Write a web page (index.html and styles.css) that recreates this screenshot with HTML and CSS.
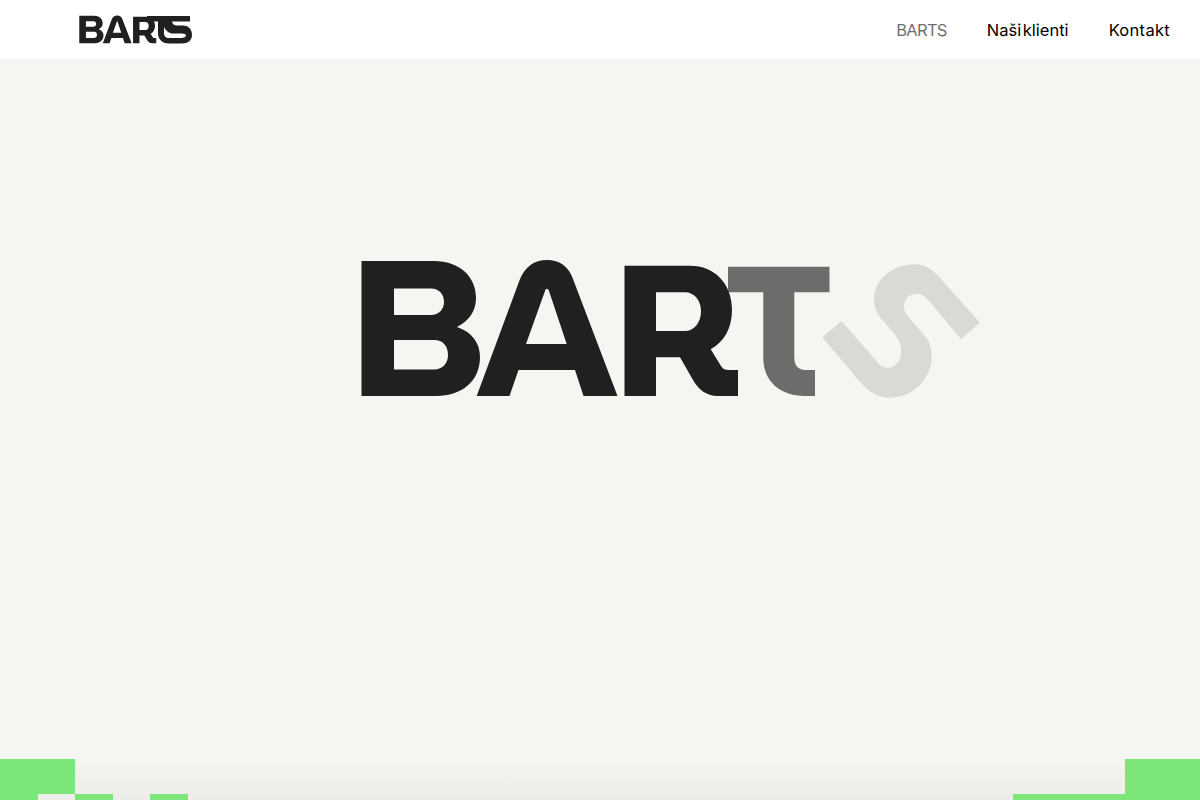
FILE: index.html
```html
<!DOCTYPE html>
<html lang="en">
<head>
    <meta charset="UTF-8">
    <meta name="viewport" content="width=device-width, initial-scale=1.0">
    <title>BARTS</title>
    <link rel="stylesheet" href="styles.css">
</head>
<body>
    <!-- Header -->
    <header class="site-header">
        <a class="brand" href="#" aria-label="BARTS">
            <svg class="brand-logo" viewBox="79 15 114 29" aria-hidden="true">
                <use href="#mark-bar" transform="translate(5.4 -37.65) scale(.2044)"/>
                <path class="ink" fill-rule="evenodd" d="M147 16H190V21.5H172C172.5 24 174 25.5 177 25.5H183C189 25.5 192 30 192 35C192 40 188 43.5 182 43.5H169C162 43.5 158 39 158 33V21.5H147ZM164 27V33C164 36 166 38 169 38H181C184 38 186 37.2 186 35.6C186 34.5 185 33.5 182 33.5H173C169 33.5 166 31 164 27Z"/>
            </svg>
        </a>
        <nav class="main-nav">
            <a class="nav-link nav-link-active" href="#">BARTS</a>
            <a class="nav-link" href="#">Naši klienti</a>
            <a class="nav-link nav-link-wide" href="#">Kontakt</a>
        </nav>
    </header>

    <!-- Hero -->
    <main class="hero">
        <div class="hero-logo-wrap">
            <svg class="hero-logo" viewBox="361 259 620 140" role="img" aria-label="BARTS logo">
                <path class="mark-s" d="M822.3 337.3L841.7 321L878.3 363.3C881 366 884 368 888 368C895 368 901 361 901 352C901 347 900 341 896 336L880 317C876 312 874 306 874 300C874 280 892 264.3 915 264.3C926 264.3 936 272 943.3 281.7L980 322.7L961 339L926.7 298.3C924 295.5 921 293.7 916.7 293.7C910 293.7 904 299 904 306.7C904 309.5 905 312.5 908.3 316.7L926.7 338.3C930 343 931.7 349 931.7 356C931.7 379 913 397.7 890 397.7C878 397.7 868 391 860 381.7Z"/>
                <path class="mark-t" d="M728 266.7H829.5V292.3H794.3V358C794.3 365 798 370 805 370H815V396H805C780 396 763.3 381 763.3 358V292.3H728Z"/>
                <g id="mark-bar" class="ink">
                    <path fill-rule="evenodd" d="M361.5 261H434C459 261 476 276 476 298C476 311 469 321 457 327C472 332 480 343 480 357C480 381 462 396 436 396H361.5ZM394 288.5V315H431C439 315 444 309 444 302C444 294 439 288.5 431 288.5ZM394 340V369.5H434C443 369.5 448 363 448 355C448 346 443 340 434 340Z"/>
                    <path fill-rule="evenodd" d="M476.7 396L520 279C525 267 534 260 547 260C560 260 569 267 573 279L617.5 396H583.5L575 370H518.5L509.5 396ZM526 344H566.7L549 291C548 288 546 288 545 291Z"/>
                    <path fill-rule="evenodd" d="M624.5 265.7H690C715 265.7 732 284 732 310C732 328 724 342 710.7 349.3L721 366C723 369 725 370 729 370H738V396H718C706 396 698 389 693 380L680 357.3H656V396H624.5ZM656 292.3V331H685C694 331 701 323 701 311C701 300 694 292.3 685 292.3Z"/>
                </g>
            </svg>
        </div>

        <!-- Green pixel strip -->
        <div class="pixel-strip">
            <span class="pixel pixel-left-top"></span>
            <span class="pixel pixel-right-top"></span>
            <span class="pixel pixel-a"></span>
            <span class="pixel pixel-b"></span>
            <span class="pixel pixel-c"></span>
            <span class="pixel pixel-d"></span>
        </div>
    </main>
</body>
</html>
```

FILE: styles.css
```css
/* Global Styles */
html, body {
    height: 800px;
    overflow: hidden;
}

body {
    margin: 0;
    background-color: #f5f6f1;
    font-family: Inter, "Liberation Sans", sans-serif;
    color: #000;
}

/* Header Styles */
.site-header {
    height: 59px;
    padding: 0 30px 0 79px;
    background-color: #fff;
    display: flex;
    justify-content: space-between;
    align-items: center;
}

.brand {
    display: block;
    height: 29px;
}

.brand-logo {
    display: block;
    height: 29px;
    width: 114px;
}

.main-nav {
    display: flex;
    gap: 40px;
}

.nav-link {
    color: #000;
    font-size: 16.5px;
    word-spacing: -3px;
    text-decoration: none;
}

.nav-link-active {
    color: #707070;
    letter-spacing: -0.7px;
}

.nav-link-wide {
    letter-spacing: 0.3px;
}

/* Hero Styles */
.hero {
    height: 741px;
    display: flex;
    flex-direction: column;
    justify-content: space-between;
    background: linear-gradient(to bottom, #f5f6f1 700px, #ecece8 741px);
}

.hero-logo-wrap {
    padding: 200px 0 0 361px;
}

.hero-logo {
    display: block;
    width: 620px;
    height: 140px;
}

.ink {
    fill: #202020;
}

.mark-t {
    fill: #6c6c6a;
}

.mark-s {
    fill: #d9dad5;
}

/* Pixel Strip */
.pixel-strip {
    display: grid;
    grid-template-columns: repeat(32, 1fr);
    grid-template-rows: 35px 6px;
}

.pixel {
    background-color: #7ce67a;
}

.pixel-left-top {
    grid-column: 1 / span 2;
    grid-row: 1;
}

.pixel-right-top {
    grid-column: 31 / span 2;
    grid-row: 1;
}

.pixel-a {
    grid-column: 1;
    grid-row: 2;
}

.pixel-b {
    grid-column: 3;
    grid-row: 2;
}

.pixel-c {
    grid-column: 5;
    grid-row: 2;
}

.pixel-d {
    grid-column: 28 / span 5;
    grid-row: 2;
}
```
